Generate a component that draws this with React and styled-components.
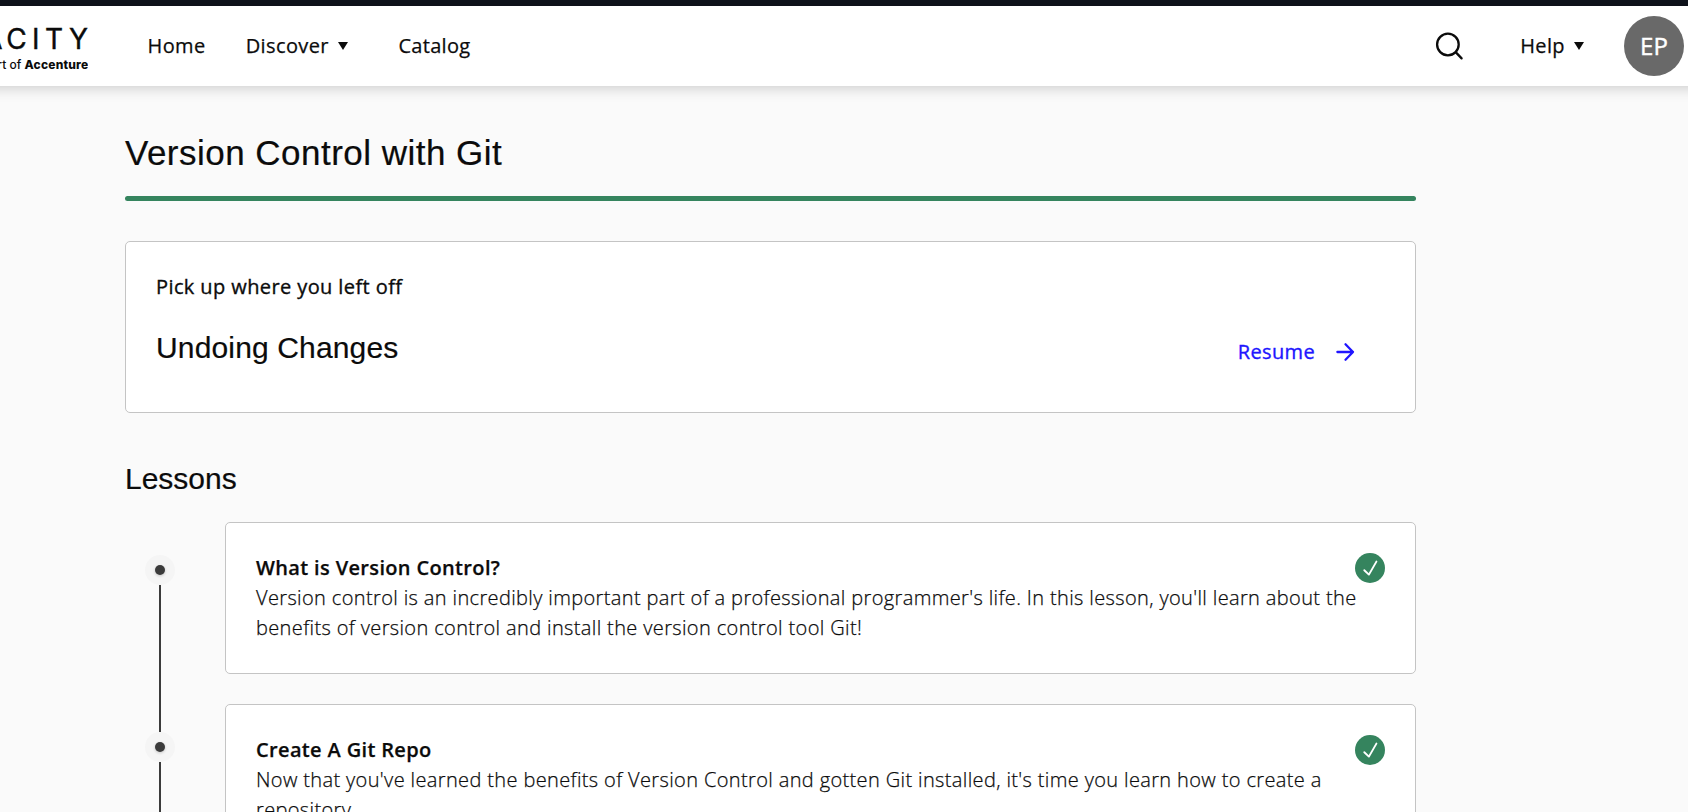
import React from "react";
import styled, { createGlobalStyle } from "styled-components";

const Global = createGlobalStyle`
  *, *::before, *::after { box-sizing: border-box; }
  html, body { margin: 0; height: 100%; overflow: hidden; }
  body {
    background: #fafafa;
    color: #0b0b0b;
    font-family: "Open Sans", "Noto Sans", sans-serif;
    font-size: 20px;
    line-height: 30px;
  }
`;

const Page = styled.div`
  display: flex;
  flex-direction: column;
  height: 812px;
  overflow: hidden;
`;

const TopStrip = styled.div`
  flex: none;
  height: 6px;
  background: #0f131c;
`;

const Header = styled.header`
  flex: none;
  display: flex;
  align-items: center;
  height: 80px;
  margin: 0 -20px;
  padding: 0 24px 0 20px;
  background: #fff;
  box-shadow: 0 2px 13px rgba(0, 0, 0, 0.19);
`;

const Logo = styled.div`
  flex: none;
  display: flex;
  flex-direction: column;
  align-items: flex-end;
  width: 88px;
  height: 80px;
  padding-top: 19px;
  overflow: hidden;
  white-space: nowrap;
`;

const Wordmark = styled.div`
  font: 400 28px/28px Inter, sans-serif;
  letter-spacing: 5.4px;
  margin-right: -5.4px;
  -webkit-text-stroke: 0.4px currentColor;
  span { letter-spacing: 3.5px; }
`;

const Tagline = styled.div`
  margin-top: 5px;
  font: 500 12px/14px Inter, sans-serif;
  letter-spacing: 0;
  b { font-weight: 800; letter-spacing: 0.2px; margin-right: -0.4px; }
`;

const NavLink = styled.a`
  display: flex;
  align-items: center;
  gap: 9px;
  margin-left: ${(p) => p.$ml}px;
  -webkit-text-stroke: 0.25px currentColor;
  letter-spacing: ${(p) => p.$ls || 0}px;
  line-height: 30px;
`;

const Caret = styled.span`
  width: 0;
  height: 0;
  border: 5px solid transparent;
  border-top: 8px solid #0b0b0b;
  border-bottom: 0;
`;

const SearchIcon = styled.svg`
  display: block;
  margin-left: auto;
`;

const Avatar = styled.div`
  display: flex;
  align-items: center;
  justify-content: center;
  width: 60px;
  height: 60px;
  margin-left: 40px;
  border-radius: 50%;
  background: #696969;
  color: #fff;
  font-size: 24px;
  -webkit-text-stroke: 0.4px currentColor;
`;

const Main = styled.main`
  flex: none;
  width: 1291px;
  margin-left: 125px;
  padding-top: 42px;
`;

const Heading = styled.h1`
  margin: 0;
  font-family: "Liberation Sans", Arial, sans-serif;
  font-weight: 400;
  font-size: ${(p) => p.$size}px;
  line-height: ${(p) => p.$lh}px;
  letter-spacing: ${(p) => p.$ls || 0}px;
  -webkit-text-stroke: 0.2px currentColor;
`;

const Progress = styled.div`
  height: 5px;
  margin: 18px 0 40px;
  border-radius: 3px;
  background: #35845e;
`;

const Card = styled.section`
  border: 1px solid #c4c4c4;
  border-radius: 5px;
  background: #fff;
`;

const ResumeCard = styled(Card)`
  height: 172px;
  padding: 30px;
`;

const ResumeLabel = styled.div`
  letter-spacing: 0.4px;
  -webkit-text-stroke: 0.35px currentColor;
`;

const ResumeRow = styled.div`
  display: flex;
  align-items: center;
  justify-content: space-between;
  margin-top: 26px;
  padding-right: 30px;
`;

const ResumeLink = styled.a`
  display: flex;
  align-items: center;
  gap: 20px;
  padding-top: 7px;
  color: #2015ff;
  letter-spacing: 0.35px;
  -webkit-text-stroke: 0.35px currentColor;
`;

const LessonsHeading = styled(Heading)`
  margin: 46px 0 23px;
`;

const Lessons = styled.div`
  display: flex;
`;

const Timeline = styled.div`
  display: flex;
  flex-direction: column;
  align-items: center;
  width: 30px;
  margin: 33px 50px 0 20px;
`;

const Marker = styled.div`
  flex: none;
  display: grid;
  place-items: center;
  width: 30px;
  height: 30px;
  border-radius: 50%;
  background: #f5f5f5;
  &::after {
    content: "";
    width: 10px;
    height: 10px;
    border-radius: 50%;
    background: #3b3b3b;
    box-shadow: 0 1px 3px rgba(0, 0, 0, 0.2);
  }
`;

const Connector = styled.div`
  flex: none;
  width: 2px;
  height: 147px;
  background: #3b3b3b;
`;

const LessonList = styled.div`
  flex: 1;
  display: flex;
  flex-direction: column;
  gap: 30px;
`;

const LessonCard = styled(Card)`
  padding: 30px;
`;

const LessonHead = styled.div`
  display: flex;
  justify-content: space-between;
  height: 30px;
`;

const LessonTitle = styled.h3`
  margin: 0;
  font-size: 20px;
  font-weight: 600;
  letter-spacing: 0.35px;
  -webkit-text-stroke: 0.25px currentColor;
`;

const LessonText = styled.p`
  margin: 0;
  font-weight: 300;
  letter-spacing: 0.365px;
  -webkit-text-stroke: 0.25px currentColor;
`;

const Check = () => (
  <svg width="30" height="30" viewBox="0 0 30 30" fill="none">
    <circle cx="15" cy="15" r="15" fill="#35845e" />
    <path d="M9.3 17.2 13.9 21.6 21.4 8.6" stroke="#fff" strokeWidth="1.9" strokeLinecap="round" strokeLinejoin="round" />
  </svg>
);

const lessons = [
  {
    title: "What is Version Control?",
    text: "Version control is an incredibly important part of a professional programmer's life. In this lesson, you'll learn about the benefits of version control and install the version control tool Git!",
  },
  {
    title: "Create A Git Repo",
    text: "Now that you've learned the benefits of Version Control and gotten Git installed, it's time you learn how to create a repository.",
  },
];

export default function App() {
  return (
    <Page>
      <Global />
      <TopStrip />
      <Header>
        <Logo>
          <Wordmark><span>A</span>CITY</Wordmark>
          <Tagline>rt of <b>Accenture</b></Tagline>
        </Logo>
        <NavLink $ml={59.5} $ls={0.4}>Home</NavLink>
        <NavLink $ml={40} $ls={0.4}>Discover<Caret /></NavLink>
        <NavLink $ml={50.5} $ls={0.3}>Catalog</NavLink>
        <SearchIcon width="30" height="30" viewBox="0 0 30 30" fill="none" stroke="#0b0b0b" strokeWidth="2.3" strokeLinecap="round">
          <circle cx="12.9" cy="13.5" r="10.8" />
          <path d="M20.9 21.4 26.6 27.4" />
        </SearchIcon>
        <NavLink $ml={55} $ls={0.4}>Help<Caret /></NavLink>
        <Avatar>EP</Avatar>
      </Header>
      <Main>
        <Heading $size={35} $lh={50} $ls={0.48}>Version Control with Git</Heading>
        <Progress />
        <ResumeCard>
          <ResumeLabel>Pick up where you left off</ResumeLabel>
          <ResumeRow>
            <Heading as="h2" $size={30} $lh={40} $ls={0.15}>Undoing Changes</Heading>
            <ResumeLink>
              Resume
              <svg width="20" height="20" viewBox="0 0 20 20" fill="none" stroke="#2015ff" strokeWidth="2.3" strokeLinecap="round" strokeLinejoin="round">
                <path d="M2.4 10H18M10.5 2.3 18 10 10.5 17.7" />
              </svg>
            </ResumeLink>
          </ResumeRow>
        </ResumeCard>
        <LessonsHeading as="h2" $size={30} $lh={40}>Lessons</LessonsHeading>
        <Lessons>
          <Timeline>
            <Marker />
            <Connector />
            <Marker />
            <Connector />
          </Timeline>
          <LessonList>
            {lessons.map((l) => (
              <LessonCard key={l.title}>
                <LessonHead>
                  <LessonTitle>{l.title}</LessonTitle>
                  <Check />
                </LessonHead>
                <LessonText>{l.text}</LessonText>
              </LessonCard>
            ))}
          </LessonList>
        </Lessons>
      </Main>
    </Page>
  );
}
